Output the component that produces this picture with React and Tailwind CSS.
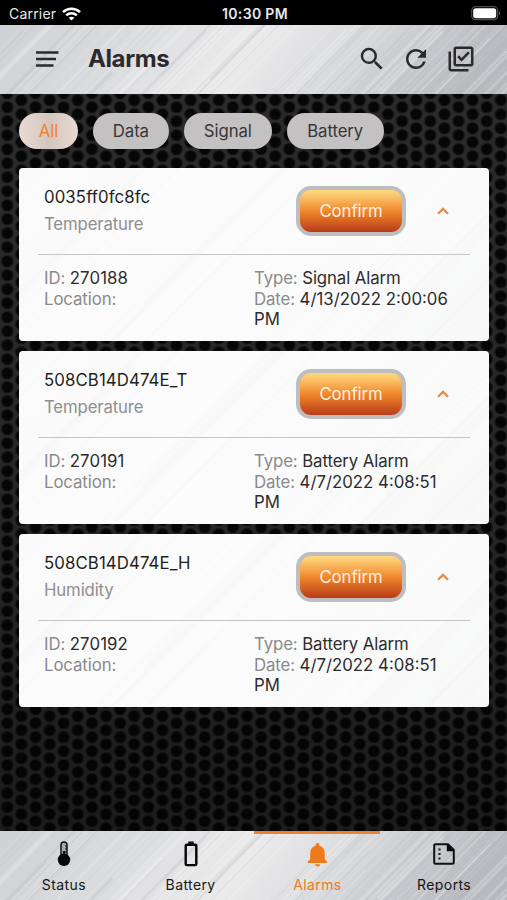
import React, { useState } from 'react';
import { MdSearch, MdRefresh, MdOutlineLibraryAddCheck, MdNotifications } from 'react-icons/md';

const filters = [
    { name: 'All', width: 'w-[59px]' },
    { name: 'Data', width: 'w-[76px]' },
    { name: 'Signal', width: 'w-[88px]' },
    { name: 'Battery', width: 'w-[97px]' },
];

const alarms = [
    { name: '0035ff0fc8fc', kind: 'Temperature', id: '270188', type: 'Signal Alarm', date: '4/13/2022 2:00:06 PM' },
    { name: '508CB14D474E_T', kind: 'Temperature', id: '270191', type: 'Battery Alarm', date: '4/7/2022 4:08:51 PM' },
    { name: '508CB14D474E_H', kind: 'Humidity', id: '270192', type: 'Battery Alarm', date: '4/7/2022 4:08:51 PM' },
];

// Fixed pseudo random scratches, so every render draws the same metal
function makeStreaks(count, seed) {
    let s = seed;
    const rand = () => {
        s = (s * 16807) % 2147483647;
        return s / 2147483647;
    };
    return Array.from({ length: count }, () => ({
        x: rand() * 700 - 130,
        y: rand() * 90 - 10,
        len: 60 + rand() * 120,
        w: 0.6 + rand() * rand() * 2.6,
        o: 0.07 + rand() * 0.2,
        light: rand() > 0.36,
    }));
}

const streaks = makeStreaks(210, 4211);

function BrushedMetal({ id, ratio = 'none' }) {
    return (
        <svg className="absolute inset-0 w-full h-full" viewBox="0 0 507 68" preserveAspectRatio={ratio}>
            <defs>
                <linearGradient id={id} x1="0" y1="0" x2="1" y2="0.1">
                    <stop offset="0" stopColor="#cfd0d3" />
                    <stop offset="0.25" stopColor="#dadbdd" />
                    <stop offset="0.52" stopColor="#ebebec" />
                    <stop offset="0.72" stopColor="#d9dadc" />
                    <stop offset="1" stopColor="#b9babe" />
                </linearGradient>
            </defs>
            <rect width="507" height="68" fill={`url(#${id})`} />
            {streaks.map((l, i) => (
                <line
                    key={i}
                    x1={l.x - l.len / 2}
                    y1={l.y + l.len * 0.5}
                    x2={l.x + l.len / 2}
                    y2={l.y - l.len * 0.5}
                    stroke={l.light ? '#ffffff' : '#aeafb4'}
                    strokeWidth={l.w}
                    strokeLinecap="round"
                    opacity={l.o}
                />
            ))}
        </svg>
    );
}

function HexMesh() {
    return (
        <svg className="absolute inset-0 w-full h-full">
            <defs>
                <pattern id="mesh" x="7.3" y="13.2" width="28.2" height="14" patternUnits="userSpaceOnUse">
                    <rect width="28.2" height="14" fill="#2b2b2c" />
                    <g fill="#060606" stroke="#161617" strokeWidth="1">
                        <circle cx="0" cy="0" r="5.8" />
                        <circle cx="28.2" cy="0" r="5.8" />
                        <circle cx="0" cy="14" r="5.8" />
                        <circle cx="28.2" cy="14" r="5.8" />
                        <circle cx="14.1" cy="7" r="5.8" />
                    </g>
                </pattern>
                <linearGradient id="meshShade" x1="0" y1="0" x2="0" y2="1">
                    <stop offset="0" stopColor="#000" stopOpacity="0" />
                    <stop offset="0.6" stopColor="#000" stopOpacity="0.12" />
                    <stop offset="1" stopColor="#000" stopOpacity="0.36" />
                </linearGradient>
            </defs>
            <rect width="100%" height="100%" fill="url(#mesh)" />
            <rect width="100%" height="100%" fill="url(#meshShade)" />
        </svg>
    );
}

function StatusBar() {
    return (
        <div className="h-[25px] shrink-0 bg-black text-[#e8e8e8] grid grid-cols-3 items-center pl-[9px] pr-[6px] pt-[2px] text-[14px]">
            <div className="flex items-center gap-[6px]">
                <span className="tracking-[0.2px]">Carrier</span>
                <svg width="19" height="14" viewBox="0 0 19 14" fill="none" stroke="#fff" strokeWidth="2.5">
                    <path d="M1 5.2C5.8 0.7 13.2 0.7 18 5.2" />
                    <path d="M4.2 8.4C7.2 5.6 11.8 5.6 14.8 8.4" />
                    <path d="M9.5 13.6L6.6 10.8C8.2 9.3 10.8 9.3 12.4 10.8Z" fill="#fff" stroke="none" />
                </svg>
            </div>
            <span className="text-center font-semibold whitespace-nowrap tracking-[0.35px]">10:30 PM</span>
            <svg className="justify-self-end" width="30" height="15" viewBox="0 0 30 15">
                <rect x="0.7" y="0.7" width="26" height="13" rx="4" fill="none" stroke="#4e4e4e" strokeWidth="1.2" />
                <rect x="2.2" y="2.2" width="23" height="10" rx="2.6" fill="#fff" />
                <path d="M28 5.2C29.6 5.8 29.6 8.8 28 9.4Z" fill="#5e5e5e" />
            </svg>
        </div>
    );
}

function Header() {
    return (
        <header className="relative h-[69px] shrink-0 overflow-hidden">
            <BrushedMetal id="metalTop" />
            <div className="relative h-full flex items-center pl-9 pr-[31.5px] pb-px text-[#2a2a2c]">
                <svg width="23" height="16" viewBox="0 0 23 16" stroke="currentColor" strokeWidth="2.4">
                    <path d="M0 1.5H22.5M0 8H20M0 14.5H17.5" />
                </svg>
                <h1 className="ml-[29px] text-[24px] font-bold tracking-[-0.4px]">Alarms</h1>
                <div className="ml-auto flex gap-[14.5px]">
                    <MdSearch size={30} />
                    <MdRefresh size={30} />
                    <MdOutlineLibraryAddCheck size={30} />
                </div>
            </div>
        </header>
    );
}

function AlarmCard({ alarm }) {
    return (
        <div className="relative h-[173px] rounded-[4px] overflow-hidden bg-white">
            <div className="absolute inset-0 opacity-[0.18]">
                <BrushedMetal id={`metal${alarm.id}`} ratio="xMidYMid slice" />
            </div>
            <div className="relative px-[19px]">
                <div className="h-[87px] flex items-center border-b border-[#c6c6c6] pl-[6px]">
                    <div className="w-[252px] leading-[27px]">
                        <div className="text-[#1f1f20] tracking-[0.1px]">{alarm.name}</div>
                        <div className="text-[#8f8f90] tracking-[-0.15px]">{alarm.kind}</div>
                    </div>
                    <button className="w-[110px] h-[50px] rounded-[15px] border-4 border-[#bebebe] bg-linear-to-b from-[#fddb80] via-[#f0882c] via-50% to-[#b83a18] bg-origin-padding text-[#fff1e0] tracking-[-0.1px] pt-px">
                        Confirm
                    </button>
                    <svg className="ml-[30.5px]" width="12" height="8" viewBox="0 0 12 8" fill="none" stroke="#e88a4a" strokeWidth="2.2">
                        <path d="M1 6.8L6 1.9L11 6.8" />
                    </svg>
                </div>
                <div className="flex pl-[6px] pt-[13px] leading-[20.6px] text-[#8a8a8b] tracking-[-0.1px]">
                    <div className="w-[210px]">
                        <div>ID: <span className="text-[#2c2c2d] tracking-[0.1px]">{alarm.id}</span></div>
                        <div>Location:</div>
                    </div>
                    <div className="w-[202px]">
                        <div>Type: <span className="text-[#2c2c2d]">{alarm.type}</span></div>
                        <div>Date: <span className="text-[#2c2c2d] tracking-[0px]">{alarm.date}</span></div>
                    </div>
                </div>
            </div>
        </div>
    );
}

function ThermometerIcon() {
    return (
        <svg width="14" height="26" viewBox="0 0 14 26">
            <path d="M4 15V4a3 3 0 0 1 6 0v11" fill="#aaa" stroke="#111" strokeWidth="1.5" />
            <path d="M8 5H10M8 8H10M8 11H10" stroke="#111" strokeWidth="1" />
            <path d="M5.9 10h2.2v8H5.9z" fill="#050505" />
            <circle cx="7" cy="18.8" r="6.2" fill="#050505" />
        </svg>
    );
}

function BatteryIcon() {
    return (
        <svg width="14" height="26" viewBox="0 0 14 26">
            <rect x="1.7" y="3.7" width="10.6" height="20.4" rx="1" fill="none" stroke="#050505" strokeWidth="2.4" />
            <rect x="4.3" y="0.5" width="5.4" height="3.5" fill="#050505" />
        </svg>
    );
}

function ReportIcon() {
    return (
        <svg width="22" height="22" viewBox="0 0 22 22">
            <path d="M2.5 1.2H15L20.8 7V19.5a1.3 1.3 0 0 1-1.3 1.3H2.5a1.3 1.3 0 0 1-1.3-1.3V2.5a1.3 1.3 0 0 1 1.3-1.3Z" fill="none" stroke="#111" strokeWidth="2" />
            <path d="M13.8 1V8.2H21Z" fill="#050505" />
            <path d="M5.4 5.4h2.2v2H5.4zM5.4 10h2.2v2H5.4zM5.4 14.6h2.2v2H5.4z" fill="#222" />
        </svg>
    );
}

const tabs = [
    { name: 'Status', icon: <ThermometerIcon /> },
    { name: 'Battery', icon: <BatteryIcon /> },
    { name: 'Alarms', icon: <MdNotifications size={29} /> },
    { name: 'Reports', icon: <ReportIcon /> },
];

function App() {
    const [filter, setFilter] = useState('All');

    return (
        <div className="w-[507px] h-[900px] flex flex-col overflow-hidden bg-black font-[Inter,sans-serif] text-[16.8px]">
            <StatusBar />
            <Header />

            <main className="relative flex-1 min-h-0">
                <HexMesh />
                <div className="relative pl-[19px] pr-[18px] pt-[19px]">
                    {/* Filters */}
                    <div className="flex gap-[14.9px]">
                        {filters.map(({ name, width }) => (
                            <button
                                key={name}
                                onClick={() => setFilter(name)}
                                className={`${width} h-9 pt-px rounded-full tracking-[-0.1px] ${filter === name ? 'bg-linear-to-r from-[#eadcd3] via-[#d3c6bf] to-[#e8dad2] text-[#ee8430]' : 'bg-[#c4c1c3] text-[#363637]'}`}
                            >
                                {name}
                            </button>
                        ))}
                    </div>

                    <div className="mt-[19px] flex flex-col gap-[10px]">
                        {alarms.map((alarm) => (
                            <AlarmCard key={alarm.id} alarm={alarm} />
                        ))}
                    </div>
                </div>
            </main>

            <nav className="relative h-[69px] shrink-0 overflow-hidden">
                <BrushedMetal id="metalBottom" />
                <div className="relative h-full grid grid-cols-4">
                    {tabs.map(({ name, icon }) => (
                        <div
                            key={name}
                            className={`flex flex-col items-center border-t-[3px] text-[14px] tracking-[0.4px] ${name === 'Alarms' ? 'border-[#ea8135] text-[#ee7a1b]' : 'border-transparent text-[#161617]'}`}
                        >
                            <div className="h-10 pl-px flex items-center justify-center">{icon}</div>
                            <span className="leading-[21px] pl-px">{name}</span>
                        </div>
                    ))}
                </div>
            </nav>
        </div>
    );
}

export default App;
